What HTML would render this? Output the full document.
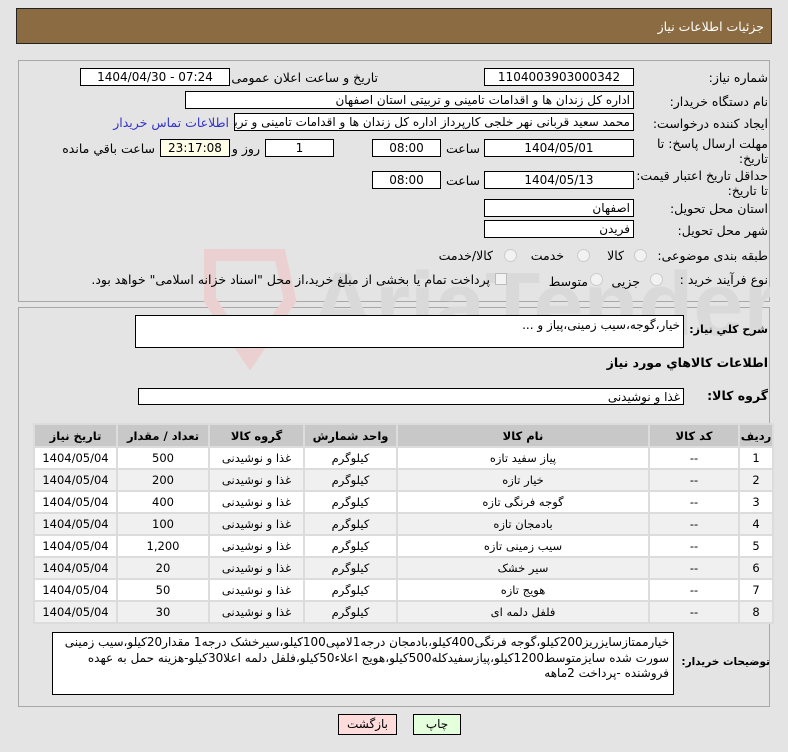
<!DOCTYPE html>
<html><head><meta charset="utf-8"><style>
body{margin:0;width:788px;height:752px;background:#e4e4e4;font-family:Tahoma,"DejaVu Sans","Noto Sans CJK SC",sans-serif;font-size:12px;color:#000;position:relative;overflow:hidden}
.a{position:absolute;white-space:nowrap}
.l{position:absolute;white-space:nowrap;direction:rtl;font-size:12.5px}
.i{position:absolute;background:#fff;border:1px solid #000;box-sizing:border-box;height:18px;line-height:16px;text-align:center;font-size:12px;overflow:hidden;white-space:nowrap}
.r{direction:rtl;text-align:right;padding-right:3px}
.rad{position:absolute;width:11px;height:11px;border-radius:50%;background:#f2f2f2;border:1px solid #ccc}
table{position:absolute;left:33px;top:423px;width:741px;border-collapse:separate;border-spacing:2px;background:#dcdcdc;direction:rtl;font-size:11.5px;table-layout:fixed}
td,th{text-align:center;height:20px;padding:0;overflow:hidden;white-space:nowrap}
th{background:#c8c8c8;height:21px;font-weight:bold}
tr:nth-child(odd) td{background:#f0f0f0}
tr:nth-child(even) td{background:#fff}
</style></head><body>
<div class="a" style="left:16px;top:8px;width:756px;height:36px;background:#8b6b41;border:1px solid #222;box-sizing:border-box"></div>
<div class="l" style="right:24px;top:19px;color:#fff;font-size:12.5px">جزئیات اطلاعات نیاز</div>

<div class="a" style="left:18px;top:60px;width:752px;height:242px;border:1px solid #a8a8a8;box-sizing:border-box"></div>
<div class="a" style="left:18px;top:307px;width:752px;height:400px;border:1px solid #a8a8a8;box-sizing:border-box"></div>

<svg class="a" style="left:190px;top:240px" width="580" height="130" viewBox="0 0 580 130"><path d="M20 15 L90 15 L100 60 L60 120 L20 60 Z" fill="none" stroke="#ead0d0" stroke-width="12"/><text x="120" y="95" font-family="Liberation Sans" font-weight="bold" font-size="90" fill="#d9d9d9">AriaTender.net</text></svg>

<div class="l" style="right:20px;top:70px">شماره نیاز:</div>
<div class="i" style="left:484px;top:68px;width:150px">1104003903000342</div>
<div class="l" style="right:410px;top:70px">تاریخ و ساعت اعلان عمومی:</div>
<div class="i" style="left:80px;top:68px;width:150px">1404/04/30 - 07:24</div>

<div class="l" style="right:20px;top:94px">نام دستگاه خریدار:</div>
<div class="i r" style="left:185px;top:91px;width:449px">اداره کل زندان ها و اقدامات تامینی و تربیتی استان اصفهان</div>

<div class="l" style="right:20px;top:116px">ایجاد کننده درخواست:</div>
<div class="i r" style="left:234px;top:113px;width:400px">محمد سعید قربانی نهر خلجی کارپرداز اداره کل زندان ها و اقدامات تامینی و تربیتی</div>
<div class="l" style="right:559px;top:115px;color:#3333cc">اطلاعات تماس خریدار</div>

<div class="l" style="right:20px;top:136px">مهلت ارسال پاسخ: تا</div>
<div class="l" style="right:20px;top:151px">تاریخ:</div>
<div class="i" style="left:484px;top:139px;width:150px">1404/05/01</div>
<div class="l" style="right:308px;top:141px">ساعت</div>
<div class="i" style="left:372px;top:139px;width:69px">08:00</div>
<div class="i" style="left:265px;top:139px;width:69px">1</div>
<div class="l" style="right:528px;top:141px">روز و</div>
<div class="i" style="left:160px;top:139px;width:70px;background:#ffffe8">23:17:08</div>
<div class="l" style="right:633px;top:141px">ساعت باقي مانده</div>

<div class="l" style="right:20px;top:168px">حداقل تاریخ اعتبار قیمت:</div>
<div class="l" style="right:20px;top:183px">تا تاریخ:</div>
<div class="i" style="left:484px;top:171px;width:150px">1404/05/13</div>
<div class="l" style="right:308px;top:173px">ساعت</div>
<div class="i" style="left:372px;top:171px;width:69px">08:00</div>

<div class="l" style="right:20px;top:201px">استان محل تحویل:</div>
<div class="i r" style="left:484px;top:199px;width:150px">اصفهان</div>
<div class="l" style="right:20px;top:223px">شهر محل تحویل:</div>
<div class="i r" style="left:484px;top:220px;width:150px">فریدن</div>

<div class="l" style="right:20px;top:248px">طبقه بندی موضوعی:</div>
<div class="rad" style="left:634px;top:249px"></div><div class="l" style="right:164px;top:248px">کالا</div>
<div class="rad" style="left:577px;top:249px"></div><div class="l" style="right:224px;top:248px">خدمت</div>
<div class="rad" style="left:504px;top:249px"></div><div class="l" style="right:295px;top:248px">کالا/خدمت</div>

<div class="l" style="right:20px;top:272px">نوع فرآیند خرید :</div>
<div class="rad" style="left:650px;top:273px"></div><div class="l" style="right:148px;top:274px">جزیی</div>
<div class="rad" style="left:590px;top:273px"></div><div class="l" style="right:200px;top:274px">متوسط</div>
<div class="a" style="left:495px;top:273px;width:10px;height:10px;background:#f2f2f2;border:1px solid #bbb"></div>
<div class="l" style="right:298px;top:272px">پرداخت تمام یا بخشی از مبلغ خرید،از محل "اسناد خزانه اسلامی" خواهد بود.</div>

<div class="l" style="right:20px;top:323px;font-weight:bold;font-size:11px">شرح کلي نیاز:</div>
<div class="i r" style="left:135px;top:315px;width:549px;height:33px;text-align:right;line-height:18px">خیار،گوجه،سیب زمینی،پیاز و ...</div>
<div class="l" style="right:20px;top:355px;font-weight:bold">اطلاعات کالاهاي مورد نیاز</div>
<div class="l" style="right:20px;top:388px;font-weight:bold">گروه کالا:</div>
<div class="i r" style="left:138px;top:388px;width:546px;height:17px">غذا و نوشیدنی</div>

<table>
<colgroup><col style="width:32px"><col style="width:88px"><col style="width:250px"><col style="width:91px"><col style="width:93px"><col style="width:90px"><col></colgroup>
<tr><th>ردیف</th><th>کد کالا</th><th>نام کالا</th><th>واحد شمارش</th><th>گروه کالا</th><th>تعداد / مقدار</th><th>تاریخ نیاز</th></tr>
<tr><td>1</td><td>--</td><td>پیاز سفید تازه</td><td>کیلوگرم</td><td>غذا و نوشیدنی</td><td>500</td><td>1404/05/04</td></tr>
<tr><td>2</td><td>--</td><td>خیار تازه</td><td>کیلوگرم</td><td>غذا و نوشیدنی</td><td>200</td><td>1404/05/04</td></tr>
<tr><td>3</td><td>--</td><td>گوجه فرنگی تازه</td><td>کیلوگرم</td><td>غذا و نوشیدنی</td><td>400</td><td>1404/05/04</td></tr>
<tr><td>4</td><td>--</td><td>بادمجان تازه</td><td>کیلوگرم</td><td>غذا و نوشیدنی</td><td>100</td><td>1404/05/04</td></tr>
<tr><td>5</td><td>--</td><td>سیب زمینی تازه</td><td>کیلوگرم</td><td>غذا و نوشیدنی</td><td>1,200</td><td>1404/05/04</td></tr>
<tr><td>6</td><td>--</td><td>سیر خشک</td><td>کیلوگرم</td><td>غذا و نوشیدنی</td><td>20</td><td>1404/05/04</td></tr>
<tr><td>7</td><td>--</td><td>هویج تازه</td><td>کیلوگرم</td><td>غذا و نوشیدنی</td><td>50</td><td>1404/05/04</td></tr>
<tr><td>8</td><td>--</td><td>فلفل دلمه ای</td><td>کیلوگرم</td><td>غذا و نوشیدنی</td><td>30</td><td>1404/05/04</td></tr>
</table>

<div class="l" style="right:18px;top:656px;font-weight:bold;font-size:10.5px">توضیحات خریدار:</div>
<div class="a" style="left:52px;top:632px;width:622px;height:63px;background:#fff;border:1px solid #000;box-sizing:border-box;direction:rtl;white-space:normal;padding:2px 4px;line-height:15.5px;font-size:12px">خیارممتازسایزریز200کیلو،گوجه فرنگی400کیلو،بادمجان درجه1لامپی100کیلو،سیرخشک درجه1 مقدار20کیلو،سیب زمینی سورت شده سایزمتوسط1200کیلو،پیازسفیدکله500کیلو،هویج اعلاء50کیلو،فلفل دلمه اعلا30کیلو-هزینه حمل به عهده فروشنده -پرداخت 2ماهه</div>

<div class="a" style="left:338px;top:714px;width:59px;height:21px;background:#ffdcdc;border:1px solid #000;box-sizing:border-box;text-align:center;line-height:19px">بازگشت</div>
<div class="a" style="left:413px;top:714px;width:48px;height:21px;background:#e4ffdc;border:1px solid #000;box-sizing:border-box;text-align:center;line-height:19px">چاپ</div>
</body></html>
